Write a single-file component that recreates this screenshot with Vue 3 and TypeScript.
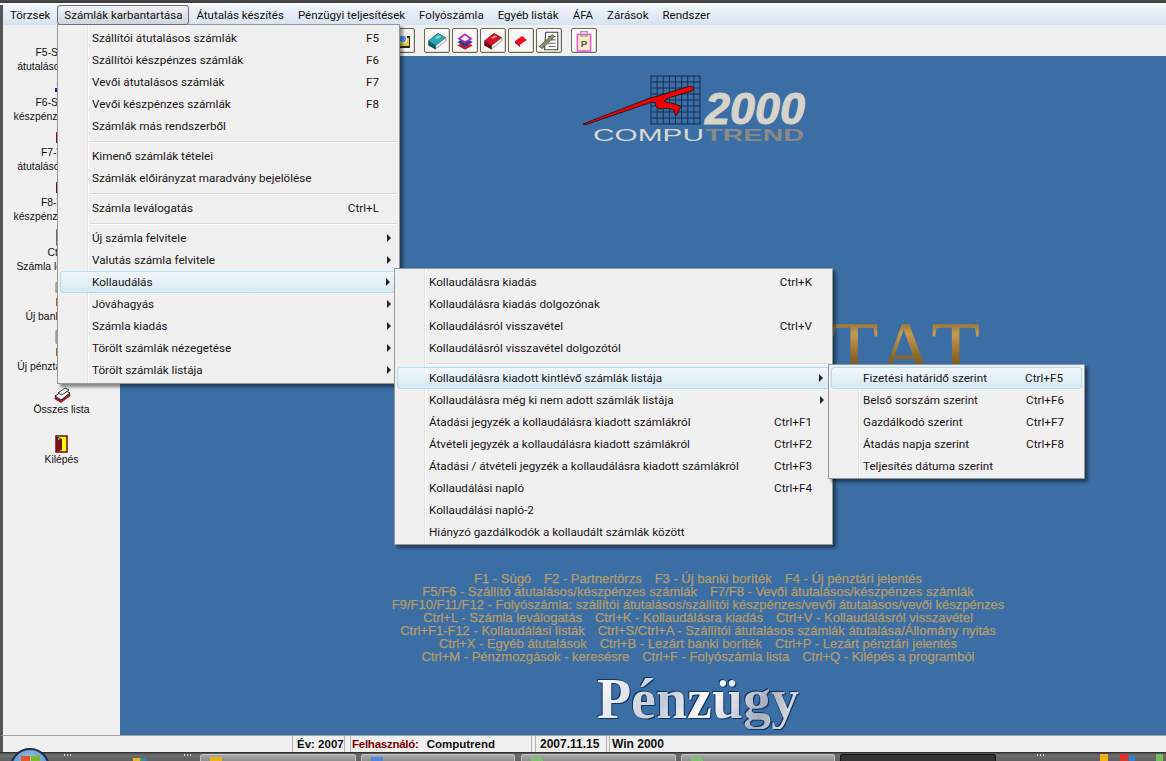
<template>
  <div class="screen">
    <div class="titlebar"></div>

    <div class="menubar">
      <div
        v-for="(name, i) in topMenu"
        :key="name"
        class="top-item"
        :class="{ open: i === 1 }"
      >{{ name }}</div>
    </div>

    <div class="body">
      <aside class="sidebar">
        <div v-for="s in side" :key="s.icon" class="side-item" :class="{ gap: s.icon === 'all' }">
          <div class="side-icon">
            <svg width="18" height="18" viewBox="0 0 18 18">
              <template v-if="s.icon === 'arrow'">
                <path d="M9 4 4 9 9 14Z" fill="#a8a8a8" stroke="#777" stroke-width=".6" />
              </template>
              <template v-else-if="s.icon === 'mix'">
                <circle cx="5" cy="6" r="1.500" fill="#e0c020" />
                <path d="M2 10H12V14H2Z" fill="#202a80" />
              </template>
              <template v-else-if="s.icon === 'red' || s.icon === 'red2'">
                <path d="M3 4H15V15H3Z" fill="#b01040" />
                <path d="M3 6H6V15H3Z" fill="#701030" />
              </template>
              <template v-else-if="s.icon === 'doc'">
                <rect x="4" y="2" width="8" height="15" fill="#fff" stroke="#111" stroke-width="1.200" />
                <path d="M6 2V17" stroke="#111" />
              </template>
              <template v-else-if="s.icon === 'bank'">
                <rect x="3" y="5" width="12" height="9" fill="#ece890" stroke="#777" />
              </template>
              <template v-else-if="s.icon === 'cash'">
                <rect x="3" y="3" width="12" height="12" fill="#c8c8c8" stroke="#777" />
                <path d="M5 6H13M5 9H13M5 12H13" stroke="#8c8c8c" />
              </template>
              <template v-else-if="s.icon === 'all'">
                <path d="M2 11 11 5 17 8 8 15Z" fill="#fff" stroke="#111" />
                <path d="M5 8 12 3 16 5 9 10Z" fill="#eee" stroke="#111" stroke-width=".8" />
                <path d="M2 12 8 15.500 17 9V11L8 17.500 2 14Z" fill="#e00010" stroke="#111" stroke-width=".5" />
              </template>
              <template v-else>
                <rect x="3" y="1" width="11" height="16" fill="#ffff00" stroke="#6b0d0d" stroke-width="1.500" />
                <path d="M3 1 9 4V15L3 17Z" fill="#7a1010" />
                <rect x="5" y="3" width="1.500" height="2" fill="#30c0e0" />
              </template>
            </svg>
          </div>
          <div v-for="l in s.lines" :key="l" class="side-line">{{ l }}</div>
        </div>
      </aside>

      <div class="content">
        <div class="toolbar">
          <div class="tool-spacer"></div>
          <div v-for="t in tools" :key="t.id" class="tool" :class="{ apart: t.id === 'clip' || t.id === 'teal' }">
            <svg v-if="t.kind === 'folder'" width="20" height="20" viewBox="0 0 20 20">
              <rect x="2" y="5" width="16" height="12" fill="#2d2a10" />
              <rect x="3" y="7" width="14" height="8" fill="#e8c840" />
              <circle cx="11" cy="8" r="4" fill="#5a9ad8" stroke="#fff" />
            </svg>
            <svg v-else-if="t.kind === 'book'" width="22" height="22" viewBox="0 0 20 20">
              <path d="M2 10 11 3 18 7 9 14Z" :fill="t.color" stroke="#222" stroke-width=".5" />
              <path d="M2 10 9 14V18L2 14Z" :fill="t.dark" />
              <path d="M9 14 18 7V10L9 17Z" fill="#eee" stroke="#555" stroke-width=".4" />
              <path d="M8 7 12 5 14 6 10 8Z" fill="#fff" opacity=".55" />
            </svg>
            <svg v-else-if="t.kind === 'stack'" width="22" height="22" viewBox="0 0 20 20">
              <path d="M3 14 10 10 17 14 10 18Z" fill="#c02030" />
              <path d="M3 11 10 7 17 11 10 15Z" fill="#2a3c90" />
              <path d="M3 8 10 3 17 8 10 12Z" fill="#b030b0" />
              <path d="M6 8 10 5 14 8 10 10Z" fill="#fff" />
            </svg>
            <svg v-else-if="t.kind === 'small'" width="20" height="20" viewBox="0 0 20 20">
              <path d="M4 10 11 5 16 9 9 14Z" fill="#ee1020" />
              <path d="M4 10 9 14V16L4 12Z" fill="#900" />
              <path d="M9 14 16 9V10.500L9 16Z" fill="#eee" />
            </svg>
            <svg v-else-if="t.kind === 'page'" width="22" height="22" viewBox="0 0 20 20">
              <path d="M7 2H18V18H6Z" fill="#fff" stroke="#444" />
              <path d="M9 6H16M9 9H16M9 12H16M10 15H16" stroke="#666" />
              <path d="M1 15 13 4 15 6 4 17Z" fill="#8c8c70" stroke="#333" stroke-width=".5" />
            </svg>
            <svg v-else width="22" height="22" viewBox="0 0 20 20">
              <rect x="4" y="4" width="12" height="15" fill="#f8f0c0" stroke="#ee60e0" stroke-width="1.500" />
              <rect x="7" y="1.500" width="6" height="4" fill="none" stroke="#999" />
              <text x="10" y="15.500" text-anchor="middle" class="clip-letter">P</text>
            </svg>
          </div>
        </div>

        <main class="desk">
          <svg class="logo" width="226" height="70" viewBox="0 0 226 70">
            <rect x="71" y="2" width="49" height="48" fill="none" stroke="#13294a" />
            <path :d="gridPath" fill="none" stroke="#13294a" stroke-width=".9" />
            <path
              d="M3 50 70 24 78 22 110 12Q116 13 112 17L88 24 84 27Q86 29 92 29L100 32Q101 34 99 36L97 41H95L94 36Q88 33 80 35 74 33 76 29L72 28 5 51Z"
              fill="#f00000" stroke="#111" stroke-width=".8"
            />
            <text x="125" y="50" class="logo-year">2000</text>
            <text x="13" y="67" class="logo-a" textLength="111" lengthAdjust="spacingAndGlyphs">COMPU</text>
            <text x="125" y="67" class="logo-b" textLength="99" lengthAdjust="spacingAndGlyphs">TREND</text>
          </svg>

          <div class="title">TAT</div>

          <div class="keys">
            <div v-for="(line, i) in keyLines" :key="i" class="key-line">
              <span v-for="k in line" :key="k">{{ k }}</span>
            </div>
          </div>

          <div class="brand">Pénzügy</div>
        </main>
      </div>
    </div>

    <footer class="status">
      <div class="stat-fill"></div>
      <div class="stat stat-year">Év: 2007</div>
      <div class="stat stat-user"><span class="user-label">Felhasználó:</span><span>Computrend</span></div>
      <div class="stat stat-date">2007.11.15</div>
      <div class="stat-win">Win 2000</div>
    </footer>

    <div class="taskbar">
      <div class="orb">
        <span class="pane p1"></span><span class="pane p2"></span>
      </div>
      <span class="grip grip-a"></span>
      <span class="quick"></span>
      <span class="grip grip-b"></span>
      <div class="task task-1"><i class="ti yellow"></i></div>
      <div class="task task-2"><i class="ti blue"></i></div>
      <div class="task task-3"><i class="ti green"></i></div>
      <div class="task task-4"><i class="ti green"></i></div>
      <div class="task task-5 active"></div>
      <span class="grip grip-c"></span>
      <span class="tray"></span>
    </div>

    <div
      v-for="m in menus"
      :key="m.id"
      class="menu"
      :class="m.id"
    >
      <template v-for="(it, i) in m.items" :key="i">
        <div v-if="it.label === '-'" class="sep"></div>
        <div v-else class="menu-item" :class="{ hot: it.hot }">
          <span class="label">{{ it.label }}</span>
          <span v-if="it.key" class="shortcut">{{ it.key }}</span>
          <span v-if="it.sub" class="arrow"></span>
        </div>
      </template>
    </div>
  </div>
</template>

<script setup lang="ts">
interface MenuItem {
  label: string;
  key?: string;
  sub?: boolean;
  hot?: boolean;
}

const topMenu = [
  "Törzsek",
  "Számlák karbantartása",
  "Átutalás készítés",
  "Pénzügyi teljesítések",
  "Folyószámla",
  "Egyéb listák",
  "ÁFA",
  "Zárások",
  "Rendszer",
];

const tools = [
  { id: "open", kind: "folder" },
  { id: "teal", kind: "book", color: "#20b0b8", dark: "#0c5c60" },
  { id: "stack", kind: "stack" },
  { id: "red", kind: "book", color: "#e01020", dark: "#700810" },
  { id: "small", kind: "small" },
  { id: "page", kind: "page" },
  { id: "clip", kind: "clip" },
];

const side = [
  { icon: "arrow", lines: ["F5-Szállítói", "átutalásos számlák"] },
  { icon: "mix", lines: ["F6-Szállítói", "készpénzes számlák"] },
  { icon: "red", lines: ["F7-Vevői", "átutalásos számlák"] },
  { icon: "red2", lines: ["F8-Vevői", "készpénzes számlák"] },
  { icon: "doc", lines: ["Ctrl+L", "Számla leválogatás"] },
  { icon: "bank", lines: ["F3", "Új banki boríték"] },
  { icon: "cash", lines: ["F4", "Új pénztári jelentés"] },
  { icon: "all", lines: ["Összes lista"] },
  { icon: "exit", lines: ["Kilépés"] },
];

const gridPath = (() => {
  let d = "";
  for (let i = 1; i < 8; i++) {
    const x = 71 + i * 6.125;
    const y = 2 + i * 6;
    d += `M${x} 2V50M71 ${y}H120`;
  }
  return d;
})();

const keyLines = [
  ["F1 - Súgó", "F2 - Partnertörzs", "F3 - Új banki boríték", "F4 - Új pénztári jelentés"],
  ["F5/F6 - Szállító átutalásos/készpénzes számlák", "F7/F8 - Vevői átutalásos/készpénzes számlák"],
  ["F9/F10/F11/F12 - Folyószámla: szállítói átutalásos/szállítói készpénzes/vevői átutalásos/vevői készpénzes"],
  ["Ctrl+L - Számla leválogatás", "Ctrl+K - Kollaudálásra kiadás", "Ctrl+V - Kollaudálásról visszavétel"],
  ["Ctrl+F1-F12 - Kollaudálási listák", "Ctrl+S/Ctrl+A - Szállítói átutalásos számlák átutalása/Állomány nyitás"],
  ["Ctrl+X - Egyéb átutalások", "Ctrl+B - Lezárt banki boríték", "Ctrl+P - Lezárt pénztári jelentés"],
  ["Ctrl+M - Pénzmozgások - keresésre", "Ctrl+F - Folyószámla lista", "Ctrl+Q - Kilépés a programból"],
];

const mainItems: MenuItem[] = [
  { label: "Szállítói átutalásos számlák", key: "F5" },
  { label: "Szállítói készpénzes számlák", key: "F6" },
  { label: "Vevői átutalásos számlák", key: "F7" },
  { label: "Vevői készpénzes számlák", key: "F8" },
  { label: "Számlák más rendszerből" },
  { label: "-" },
  { label: "Kimenő számlák tételei" },
  { label: "Számlák előirányzat maradvány bejelölése" },
  { label: "-" },
  { label: "Számla leválogatás", key: "Ctrl+L" },
  { label: "-" },
  { label: "Új számla felvitele", sub: true },
  { label: "Valutás számla felvitele", sub: true },
  { label: "Kollaudálás", sub: true, hot: true },
  { label: "Jóváhagyás", sub: true },
  { label: "Számla kiadás", sub: true },
  { label: "Törölt számlák nézegetése", sub: true },
  { label: "Törölt számlák listája", sub: true },
];

const kollItems: MenuItem[] = [
  { label: "Kollaudálásra kiadás", key: "Ctrl+K" },
  { label: "Kollaudálásra kiadás dolgozónak" },
  { label: "Kollaudálásról visszavétel", key: "Ctrl+V" },
  { label: "Kollaudálásról visszavétel dolgozótól" },
  { label: "-" },
  { label: "Kollaudálásra kiadott kintlévő számlák listája", sub: true, hot: true },
  { label: "Kollaudálásra még ki nem adott számlák listája", sub: true },
  { label: "Átadási jegyzék a kollaudálásra kiadott számlákról", key: "Ctrl+F1" },
  { label: "Átvételi jegyzék a kollaudálásra kiadott számlákról", key: "Ctrl+F2" },
  { label: "Átadási / átvételi jegyzék a kollaudálásra kiadott számlákról", key: "Ctrl+F3" },
  { label: "Kollaudálási napló", key: "Ctrl+F4" },
  { label: "Kollaudálási napló-2" },
  { label: "Hiányzó gazdálkodók a kollaudált számlák között" },
];

const listItems: MenuItem[] = [
  { label: "Fizetési határidő szerint", key: "Ctrl+F5", hot: true },
  { label: "Belső sorszám szerint", key: "Ctrl+F6" },
  { label: "Gazdálkodó szerint", key: "Ctrl+F7" },
  { label: "Átadás napja szerint", key: "Ctrl+F8" },
  { label: "Teljesítés dátuma szerint" },
];

const menus = [
  { id: "menu-main", items: mainItems },
  { id: "menu-koll", items: kollItems },
  { id: "menu-list", items: listItems },
];
</script>

<style>
html,
body {
  margin: 0;
  overflow: hidden;
  background: #f0f0f0;
}
</style>

<style scoped>
.screen {
  position: relative;
  width: 1166px;
  height: 761px;
  overflow: hidden;
  display: flex;
  flex-direction: column;
  background: #f0f0f0;
  font-family: Roboto, "Liberation Sans", sans-serif;
  font-size: 11.7px;
  color: #111;
}

.titlebar {
  height: 5px;
  flex: none;
  background: linear-gradient(#4a4a4a, #3a3a3a 60%, #fff 60%);
}

.menubar {
  height: 20px;
  flex: none;
  display: flex;
  align-items: center;
  box-sizing: border-box;
  background: linear-gradient(#f2f5fb, #d7e2f2);
  border-left: 3px solid #555;
  font-size: 11.5px;
}

.top-item {
  height: 18px;
  line-height: 18px;
  padding: 0 6px;
  border: 1px solid transparent;
  white-space: nowrap;
}

.top-item.open {
  position: relative;
  z-index: 6;
  border-color: #6a7078;
  border-radius: 3px;
  background: linear-gradient(#f0f3f7, #cfd6df);
}

.body {
  flex: 1;
  min-height: 0;
  display: flex;
}

.sidebar {
  width: 117px;
  flex: none;
  padding-top: 3px;
  background: #f0f0f0;
  border-left: 3px solid #555;
  font-family: "Liberation Sans", sans-serif;
  font-size: 10.4px;
}

.side-item {
  height: 50px;
  text-align: center;
}

.side-item.gap {
  margin-top: 7px;
}

.side-icon {
  height: 18px;
  display: flex;
  justify-content: center;
}

.side-line {
  height: 14px;
  line-height: 14px;
  white-space: nowrap;
}

.content {
  flex: 1;
  min-width: 0;
  display: flex;
  flex-direction: column;
}

.toolbar {
  height: 31px;
  flex: none;
  display: flex;
  align-items: flex-start;
  padding-top: 3px;
  box-sizing: border-box;
  gap: 2px;
  background: #f0f0f0;
}

.tool-spacer {
  width: 267px;
  flex: none;
}

.tool {
  width: 26px;
  height: 25px;
  flex: none;
  box-sizing: border-box;
  display: flex;
  align-items: center;
  justify-content: center;
  border: 1px solid #6f6a4c;
  border-radius: 2px;
  background: #f7f7f7;
  box-shadow: inset -1px -1px 0 #d8d8d8;
}

.tool.apart {
  margin-left: 7px;
}

.clip-letter {
  font: bold 9px "Liberation Sans", sans-serif;
  fill: #555;
}

.desk {
  flex: 1;
  min-height: 0;
  padding-left: 110px;
  display: flex;
  flex-direction: column;
  align-items: center;
  background: #3a6ea5;
}

.logo {
  flex: none;
  margin: 18px 10px 0 0;
}

.logo-year {
  font: italic bold 45px "Liberation Sans", sans-serif;
  fill: #d6d3cb;
  stroke: #d6d3cb;
}

.logo-a {
  font: 17px "Liberation Sans", sans-serif;
  fill: #d8d6ce;
}

.logo-b {
  font: bold 17px "Liberation Sans", sans-serif;
  fill: #8a8a88;
}

.title {
  align-self: flex-end;
  flex: none;
  height: 80px;
  margin: 166px 181px 0 0;
  font: 80px/80px "Liberation Serif", serif;
  letter-spacing: 5px;
  background: linear-gradient(#5f4416, #c59a52 30%, #8b6526 60%, #4d3510);
  -webkit-background-clip: text;
  background-clip: text;
  color: transparent;
  white-space: nowrap;
}

.keys {
  flex: none;
  margin-top: 182px;
  color: #b59c6c;
  font-family: "Liberation Sans", sans-serif;
  font-size: 13px;
  line-height: 13px;
  -webkit-text-stroke: 0.25px #b59c6c;
}

.key-line {
  display: flex;
  justify-content: center;
  gap: 13px;
  height: 13px;
  white-space: nowrap;
}

.brand {
  flex: none;
  margin-top: 6px;
  height: 60px;
  font: bold 56px/60px "Liberation Serif", serif;
  background: linear-gradient(115deg, #fff, #c3c9d4 35%, #fff 55%, #a6aebc 80%, #eef0f4);
  -webkit-background-clip: text;
  background-clip: text;
  color: transparent;
  filter: drop-shadow(1px 1px 0 #0f3362) drop-shadow(-1px -1px 0 #0f3362);
}

.status {
  height: 17px;
  flex: none;
  display: flex;
  box-sizing: border-box;
  border-top: 1px solid #a0a0a0;
  border-left: 3px solid #555;
  background: #f0f0f0;
  font: bold 11.500px/17px "Liberation Sans", sans-serif;
  white-space: nowrap;
}

.stat-fill {
  width: 289px;
  flex: none;
}

.stat {
  flex: none;
  box-sizing: border-box;
  border-left: 1px solid #b0b0b0;
  border-right: 1px solid #b0b0b0;
  padding-left: 4px;
}

.stat-year {
  width: 53px;
  margin-right: 5px;
}

.stat-user {
  width: 182px;
  margin-right: 3px;
  padding-left: 1px;
  display: flex;
  gap: 8px;
}

.user-label {
  color: #7a0000;
  letter-spacing: -0.25px;
}

.stat-date {
  width: 72px;
  margin-right: 2px;
  font-size: 12px;
}

.stat-win {
  border-left: 1px solid #b0b0b0;
  padding-left: 2px;
  font-size: 12px;
}

.taskbar {
  position: relative;
  height: 9px;
  flex: none;
  background: linear-gradient(#4c4c4c, #6e6e6e 25%, #606060);
  border-top: 1px solid #333;
  box-sizing: border-box;
}

.orb {
  position: absolute;
  left: 10px;
  top: -5px;
  width: 40px;
  height: 40px;
  box-sizing: border-box;
  border-radius: 50%;
  border: 2px solid #1c2f4a;
  background: radial-gradient(circle at 50% 30%, #a8c8e8, #4b86c0 70%);
}

.pane {
  position: absolute;
  top: 6px;
  width: 9px;
  height: 8px;
}

.p1 {
  left: 9px;
  background: #e0552a;
}

.p2 {
  left: 19px;
  background: #7cb832;
}

.grip {
  position: absolute;
  top: 1px;
  width: 8px;
  height: 2px;
  background: repeating-linear-gradient(90deg, #d8d8d8 0 1px, transparent 1px 3px);
}

.grip-a {
  left: 64px;
}

.grip-b {
  left: 184px;
}

.grip-c {
  left: 1037px;
}

.quick {
  position: absolute;
  left: 133px;
  top: 5px;
  width: 14px;
  height: 3px;
  background: linear-gradient(90deg, #e8b820, #e8b820 50%, #50a050 50%, #3070c0);
}

.task {
  position: absolute;
  top: 1px;
  height: 8px;
  box-sizing: border-box;
  border: 1px solid #c4c4c4;
  border-bottom: 0;
  border-radius: 3px 3px 0 0;
  background: linear-gradient(#a8a8a8, #8a8a8a);
}

.task-1 {
  left: 200px;
  width: 156px;
}

.task-2 {
  left: 361px;
  width: 154px;
}

.task-3 {
  left: 521px;
  width: 155px;
}

.task-4 {
  left: 681px;
  width: 154px;
}

.task-5 {
  left: 840px;
  width: 156px;
}

.task.active {
  background: #333;
  border-color: #111;
}

.ti {
  position: absolute;
  left: 9px;
  top: 2px;
  width: 12px;
  height: 5px;
}

.yellow {
  background: #f0b020;
}

.blue {
  background: #5088d8;
}

.green {
  background: #80c070;
}

.tray {
  position: absolute;
  left: 1098px;
  top: 1px;
  width: 66px;
  height: 7px;
  background:
    linear-gradient(#f0b020, #f0b020) 2px 0 / 8px 7px no-repeat,
    linear-gradient(#e03030, #e03030) 22px 0 / 8px 7px no-repeat,
    linear-gradient(#3080d0, #3080d0) 31px 2px / 6px 5px no-repeat,
    linear-gradient(#70c060, #70c060) 58px 0 / 7px 7px no-repeat;
}

/* popups lie over the page, so they are placed by coordinates */
.menu {
  position: absolute;
  z-index: 3;
  box-sizing: border-box;
  padding: 2px;
  background:
    linear-gradient(#e2e3e3, #e2e3e3) var(--gutter) 0 / 1px 100% no-repeat,
    linear-gradient(#fff, #fff) calc(var(--gutter) + 1px) 0 / 1px 100% no-repeat,
    #f0f0f0;
  border: 1px solid #979797;
  box-shadow: 3px 3px 3px rgba(0, 0, 0, 0.45);
  white-space: nowrap;
}

.menu-main {
  --gutter: 29px;
  --text: 32px;
  --keyend: 18px;
  left: 57px;
  top: 24px;
  width: 343px;
  height: 360px;
}

.menu-koll {
  --gutter: 29px;
  --text: 32px;
  --keyend: 18px;
  z-index: 4;
  left: 394px;
  top: 268px;
  width: 439px;
  height: 277px;
}

.menu-list {
  --gutter: 29px;
  --text: 32px;
  --keyend: 18px;
  z-index: 5;
  left: 828px;
  top: 364px;
  width: 257px;
  height: 115px;
}

.menu-item {
  position: relative;
  height: 22px;
  line-height: 22px;
  box-sizing: border-box;
  padding-left: var(--text);
  border: 1px solid transparent;
  border-left-width: 0;
  border-right-width: 0;
  color: #1a1416;
}

.menu-item .label {
  position: relative;
  display: block;
  line-height: 20px;
}

.menu-item.hot {
  border: 1px solid #aedcf0;
  border-radius: 3px;
  padding-left: calc(var(--text) - 1px);
  background: linear-gradient(#f2f7fb, #d6e8f4);
}

.shortcut {
  position: absolute;
  right: var(--keyend);
  top: 0;
  line-height: 20px;
}

.arrow {
  position: absolute;
  right: 6px;
  top: 6px;
  width: 0;
  height: 0;
  border-left: 4px solid #222;
  border-top: 4px solid transparent;
  border-bottom: 4px solid transparent;
}

.sep {
  height: 1px;
  margin: 4px 0 3px calc(var(--gutter) + 1px);
  background: #d7d7d7;
  box-shadow: 0 1px 0 #fff;
}
</style>
